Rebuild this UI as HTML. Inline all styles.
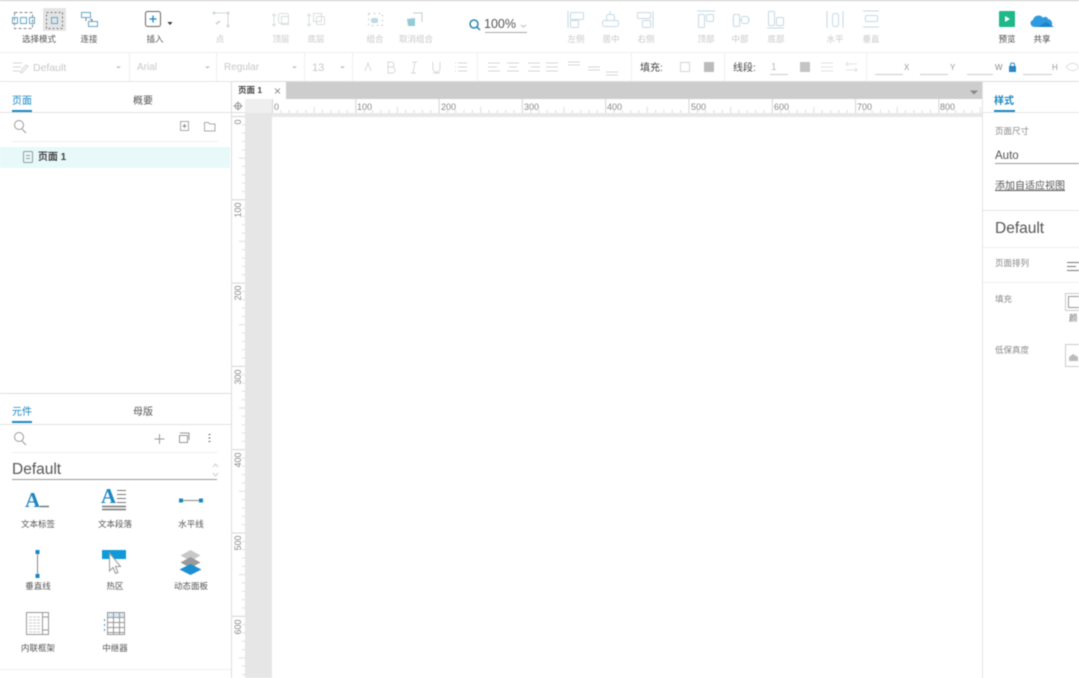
<!DOCTYPE html>
<html><head><meta charset="utf-8">
<style>
html,body{margin:0;padding:0;background:#fff}
#r{position:relative;width:1079px;height:678px;overflow:hidden;background:#fff;font-family:"Liberation Sans","Noto Sans CJK SC",sans-serif;filter:blur(.5px)}
#r div{position:absolute;white-space:nowrap}
.c{transform:translateX(-50%);line-height:12px}
.l{font-size:8.500px;color:#555}
.d{font-size:8.500px;color:#c9c9c9}
.g{font-size:10px;color:#c8c8c8;line-height:12px}
.tab{font-size:10px;line-height:12px;color:#555}
.on{color:#1b87c1}
.w{font-size:8.500px;color:#555}
svg{position:absolute;overflow:visible}
</style></head><body><div id="r">
<div style="left:0;top:0;width:1079px;height:1px;background:#c8c8c8"></div>
<div style="left:0;top:52px;width:1079px;height:1px;background:#eee"></div>
<div style="left:0;top:81px;width:231px;height:1px;background:#e6e6e6"></div>
<div style="left:231px;top:81px;width:848px;height:1px;background:#ddd"></div>

<!-- toolbar icons -->
<div style="left:43px;top:8px;width:23px;height:23px;background:#e4e4e4"></div>
<svg style="left:0;top:0" width="1079" height="52" fill="none" stroke-width="1">
<g stroke="#5fa9c9"><rect x="12.500" y="17.500" width="5" height="6"/><rect x="20.500" y="17.500" width="6" height="6"/><rect x="29.500" y="17.500" width="5" height="6"/></g>
<rect x="14.500" y="12.500" width="18" height="16" stroke="#888" stroke-dasharray="3 2"/>
<rect x="46.500" y="12.500" width="16" height="16" stroke="#777" stroke-dasharray="2 2"/><rect x="51.500" y="17.500" width="6" height="6" stroke="#5fa9c9"/>
<g stroke="#5fa9c9"><rect x="81.500" y="12.500" width="9" height="5"/><rect x="88.500" y="21.500" width="9" height="5"/></g><path d="M86 18v3M90 19.500h2v2" stroke="#777"/>
<rect x="145.500" y="11.500" width="15" height="15" rx="2" stroke="#666"/><path d="M153 15.500v7M149.500 19h7" stroke="#1b87c1" stroke-width="1.300"/>
<path d="M167.500 22h5l-2.500 3z" fill="#333"/>
<g stroke="#cfd8dc"><path d="M214 13h12M228 14v12"/><circle cx="214" cy="13" r="1" fill="#cfd8dc"/><circle cx="228" cy="13" r="1" fill="#cfd8dc"/><circle cx="228" cy="26" r="1" fill="#cfd8dc"/><path d="M216 24l4-3" stroke-width="2"/></g>
<g stroke="#d8dee0"><path d="M274 14v12M272 16l2-2 2 2M272 24l2 2 2-2"/><rect x="278.500" y="13.500" width="10" height="10" rx="2"/><rect x="281.500" y="16.500" width="7" height="8"/>
<path d="M309 14v12M307 16l2-2 2 2M307 24l2 2 2-2"/><rect x="313.500" y="13.500" width="8" height="8"/><rect x="316.500" y="16.500" width="8" height="8" rx="1"/></g>
<rect x="368.500" y="13.500" width="14" height="12" stroke="#cfcfcf" stroke-dasharray="2 3"/><rect x="371" y="18" width="7" height="5" rx="2" fill="#bcd9e4"/>
<path d="M407 19l8-1v8h-7z" fill="#96cbd6"/><path d="M413 13h9v9" stroke="#bfcfd6"/>
<circle cx="474" cy="24" r="4" stroke="#2b84b0" stroke-width="1.500"/><path d="M477 27l3 3" stroke="#2b84b0" stroke-width="1.500"/>
<path d="M485 32.500h42" stroke="#aaa"/><path d="M521 25l2.500 2 2.500-2" stroke="#bbb"/>
<g stroke="#c4dae4"><path d="M568 11v17"/><rect x="570.500" y="12.500" width="13" height="7" rx="1"/><rect x="570.500" y="20.500" width="8" height="7" rx="1"/>
<path d="M610 11v4"/><rect x="606.500" y="14.500" width="8" height="6" rx="2"/><rect x="602.500" y="20.500" width="16" height="6" rx="2"/>
<rect x="637.500" y="12.500" width="13" height="6" rx="1"/><rect x="642.500" y="20.500" width="8" height="7" rx="1"/><path d="M653 11v17"/>
<path d="M697 11h18"/><rect x="698.500" y="14.500" width="6" height="13" rx="1"/><rect x="706.500" y="14.500" width="7" height="7" rx="1"/>
<rect x="733.500" y="14.500" width="6" height="12" rx="1"/><rect x="741.500" y="16.500" width="7" height="7" rx="2"/><path d="M732 20h1M740 20h1M749 20h1"/>
<rect x="768.500" y="11.500" width="6" height="14" rx="1"/><rect x="776.500" y="17.500" width="7" height="8" rx="1"/><path d="M767 28h17"/>
<path d="M827 11v17M843 11v17"/><rect x="832.500" y="13.500" width="6" height="13" rx="2"/>
<path d="M863 11h16M863 27h16"/><rect x="865.500" y="15.500" width="12" height="6" rx="1"/></g>
<rect x="999" y="11" width="16" height="16" rx="1" fill="#1fb88a"/><path d="M1005 16l5 3-5 3z" fill="#fff"/>
<path d="M1035 27c-5 0-6-6-2-7 1-5 8-6 10-2 1-2 5-1 5 1 4 0 7 8 0 8z" fill="#2e9ae0"/><path d="M1038 27l8-5 8 5z" fill="#1d82c8"/>
</svg>

<div class="l c" style="left:39px;top:33px">选择模式</div>
<div class="l c" style="left:89px;top:33px">连接</div>
<div class="l c" style="left:155px;top:33px">插入</div>
<div class="d c" style="left:220px;top:33px">点</div>
<div class="d c" style="left:281px;top:33px">顶层</div>
<div class="d c" style="left:316px;top:33px">底层</div>
<div class="d c" style="left:375px;top:33px">组合</div>
<div class="d c" style="left:416px;top:33px">取消组合</div>
<div class="c" style="left:500px;top:17px;font-size:12.500px;color:#555;line-height:14px">100%</div>
<div class="d c" style="left:576px;top:33px">左侧</div>
<div class="d c" style="left:611px;top:33px">居中</div>
<div class="d c" style="left:646px;top:33px">右侧</div>
<div class="d c" style="left:706px;top:33px">顶部</div>
<div class="d c" style="left:740px;top:33px">中部</div>
<div class="d c" style="left:776px;top:33px">底部</div>
<div class="d c" style="left:835px;top:33px">水平</div>
<div class="d c" style="left:871px;top:33px">垂直</div>
<div class="l c" style="left:1007px;top:33px;color:#444">预览</div>
<div class="l c" style="left:1042px;top:33px;color:#444">共享</div>

<!-- format bar -->
<svg style="left:0;top:53px" width="1079" height="28" fill="none" stroke="#d6d6d6">
<path d="M129.500 0v28M216.500 0v28M304.500 0v28M352.500 0v28M477.500 0v28M631.500 0v28M724.500 0v28M866.500 0v28" stroke="#eee"/>
<path d="M13 10h9M13 14h8M13 18h6M20 19l6-7 2 1-6 7z"/>
<path d="M116 13.500h5l-2.500 2zM205 13.500h5l-2.500 2zM292 13.500h5l-2.500 2zM340 13.500h5l-2.500 2z" fill="#bbb" stroke="none"/>
<path d="M365 18l3-8 3 8M388 9h3c4 0 4 5 0 5h-3zM388 14h4c4 0 4 6 0 6h-4zM412 9h5M411 20h5M415 9l-2 11M433 9v7c0 4 7 4 7 0V9M433 20h7" stroke="#d8d8d8"/>
<path d="M458 10h9M458 14h9M458 18h9M455 10h1M455 14h1M455 18h1"/>
<path d="M488 10h12M488 14h9M488 18h12M507 10h12M509 14h8M507 18h12M528 10h12M531 14h9M528 18h12M546 10h12M546 14h12M546 18h12M568 9h12M568 12h12M588 14h12M588 17h12M606 19h12M606 22h12"/>
<rect x="680.500" y="9.500" width="9" height="9"/><rect x="704" y="9" width="10" height="10" fill="#bbb" stroke="none"/>
<rect x="800" y="9" width="10" height="10" fill="#c4c4c4" stroke="none"/>
<path d="M821 10h12M821 14h12M821 18h12M846 11h11M846 17h11M848 9l-2 2 2 2M855 15l2 2-2 2" stroke="#e2e2e2"/>
<path d="M770 21.500h18M875 21.500h28M920 21.500h28M967 21.500h26M1023 21.500h29" stroke="#ccc"/>
<path d="M1066 14c4-5 9-5 13 0M1066 14c4 5 9 5 13 0" stroke="#ddd"/>
</svg>
<svg style="left:1008px;top:62px" width="9" height="10"><rect x="1" y="4" width="7" height="6" fill="#2a86c4"/><path d="M2.500 4V2.500c0-2 4-2 4 0V4" fill="none" stroke="#2a86c4"/></svg>
<div class="g" style="left:33px;top:62px;font-size:10.500px">Default</div>
<div class="g" style="left:137px;top:62px">Arial</div>
<div class="g" style="left:224px;top:62px">Regular</div>
<div class="g" style="left:312px;top:62px;font-size:11px">13</div>
<div style="left:640px;top:63px;font-size:10px;color:#444;line-height:12px">填充:</div>
<div style="left:733px;top:63px;font-size:10px;color:#444;line-height:12px">线段:</div>
<div class="g" style="left:771px;top:62px;color:#bbb">1</div>
<div class="g" style="left:904px;top:62px;font-size:8px;color:#999">X</div>
<div class="g" style="left:950px;top:62px;font-size:8px;color:#999">Y</div>
<div class="g" style="left:995px;top:62px;font-size:8px;color:#888">W</div>
<div class="g" style="left:1052px;top:62px;font-size:8px;color:#999">H</div>

<!-- left panel -->
<div style="left:231px;top:82px;width:1px;height:596px;background:#ddd"></div>
<div class="tab on c" style="left:22px;top:96px">页面</div>
<div class="tab c" style="left:143px;top:96px">概要</div>
<div style="left:12px;top:110px;width:20px;height:2px;background:#1b87c1"></div>
<div style="left:0;top:112px;width:231px;height:1px;background:#e2e2e2"></div>
<div style="left:12px;top:141px;width:206px;height:1px;background:#eee"></div>
<div style="left:0;top:147px;width:230px;height:21px;background:#e7f9f9"></div>
<div class="c" style="left:52px;top:152px;font-size:10px;color:#444;font-weight:bold">页面 1</div>
<div style="left:0;top:393px;width:231px;height:1px;background:#ddd"></div>
<div class="tab on c" style="left:22px;top:407px">元件</div>
<div class="tab c" style="left:143px;top:407px">母版</div>
<div style="left:12px;top:421px;width:20px;height:2px;background:#1b87c1"></div>
<div style="left:0;top:424px;width:231px;height:1px;background:#e2e2e2"></div>
<div style="left:12px;top:452px;width:205px;height:1px;background:#eee"></div>
<div style="left:12px;top:461px;font-size:15.500px;line-height:18px;color:#555">Default</div>
<div style="left:12px;top:479px;width:205px;height:1px;background:#999"></div>
<div style="left:0;top:669px;width:231px;height:1px;background:#eee"></div>

<div style="left:25px;top:489px;font-family:'Liberation Serif',serif;font-weight:bold;font-size:21px;line-height:22px;color:#1b87c1">A</div>
<div style="left:101px;top:485px;font-family:'Liberation Serif',serif;font-weight:bold;font-size:21px;line-height:22px;color:#1b87c1">A</div>

<svg style="left:0;top:112px" width="231" height="566" fill="none">
<circle cx="19" cy="13" r="4.500" stroke="#999"/><path d="M22 17l4 4" stroke="#999"/>
<rect x="180.500" y="9.500" width="8" height="9" stroke="#aaa"/><path d="M184.500 12v4M182.500 14h4" stroke="#888"/>
<path d="M204.500 10.500h4l1 1.500h5.500v7h-10.500z" stroke="#aaa"/>
<rect x="23.500" y="39.500" width="9" height="11" rx="1" stroke="#999"/><path d="M26 43.500h4M26 46.500h4" stroke="#999"/>
<circle cx="19" cy="325" r="4.500" stroke="#999"/><path d="M22 329l4 4" stroke="#999"/>
<path d="M159.500 322v10M154.500 327h10" stroke="#999"/>
<path d="M180 321h9v7M179.500 323.500h8v7h-8z" stroke="#999"/>
<path d="M209.500 322v1M209.500 325.500v1M209.500 329v1" stroke="#666" stroke-width="2"/>
<path d="M213 355l2.500-3 2.500 3M213 361l2.500 3 2.500-3" stroke="#ccc"/>
<!-- widgets -->
<path d="M40 394.500h9" stroke="#777" stroke-width="1.500"/>
<path d="M117 378.500h9M117 382.500h9M117 386.500h9M117 390.500h9" stroke="#777"/><path d="M102 394.500h24M102 397.500h24" stroke="#777" stroke-width="1.500"/>
<path d="M181 388.500h20" stroke="#888"/><rect x="179" y="386.500" width="4" height="4" fill="#1b87c1"/><rect x="199" y="386.500" width="4" height="4" fill="#1b87c1"/>
<path d="M37.500 441v22" stroke="#888"/><rect x="35.500" y="438" width="4" height="4" fill="#1b87c1"/><rect x="35.500" y="462" width="4" height="4" fill="#1b87c1"/>
<rect x="102" y="438" width="24" height="9" fill="#0e9ad8"/>
<path d="M109.500 441v18l3.500-3.500 2.500 6 2.500-1-2.500-6h5z" fill="#fff" stroke="#999"/>
<path d="M190.500 438l10 5.500-10 5.500-10-5.500z" fill="#c8c8c8"/><path d="M190.500 445l10 5.500-10 5.500-10-5.500z" fill="#9a9a9a"/><path d="M190.500 452l11 5.500-11 5.500-11-5.500z" fill="#1b8fd0"/>
<rect x="26.500" y="500.500" width="22" height="22" stroke="#999"/><path d="M42.500 500v23M43 505h5M43 518h5" stroke="#999"/><path d="M29 505h11M29 508h11M29 511h11M29 514h11M29 517h11M29 520h11" stroke="#ccc" stroke-dasharray="3 1"/>
<rect x="107.500" y="500.500" width="17" height="22" stroke="#999"/><rect x="107.500" y="500.500" width="17" height="5" fill="#d8eaf2" stroke="#999"/><path d="M113.500 500v23M119.500 500v23M107 510.500h18M107 515.500h18M107 520.500h18" stroke="#999"/><path d="M104.500 507v15" stroke="#4a8fb5" stroke-dasharray="2 3"/>
</svg>
<div class="w c" style="left:38px;top:518px">文本标签</div>
<div class="w c" style="left:115px;top:518px">文本段落</div>
<div class="w c" style="left:191px;top:518px">水平线</div>
<div class="w c" style="left:38px;top:580px">垂直线</div>
<div class="w c" style="left:115px;top:580px">热区</div>
<div class="w c" style="left:191px;top:580px">动态面板</div>
<div class="w c" style="left:38px;top:642px">内联框架</div>
<div class="w c" style="left:115px;top:642px">中继器</div>

<!-- canvas -->
<div style="left:232px;top:82px;width:750px;height:17px;background:#cdcdcd"></div>
<div style="left:232px;top:82px;width:54px;height:17px;background:#fff"></div>
<div class="c" style="left:250px;top:84px;font-size:8.500px;color:#444;font-weight:bold">页面 1</div>
<svg style="left:232px;top:82px" width="750" height="36" fill="none">
<path d="M43 6.500l5 5M48 6.500l-5 5" stroke="#777" stroke-width=".8"/>
<path d="M738 8.500h8l-4 4z" fill="#888"/>
<circle cx="6" cy="24" r="3" stroke="#999"/><path d="M6 19.500v9M1.500 24h9" stroke="#999"/>
</svg>
<div style="left:245px;top:99px;width:27px;height:579px;background:#e6e6e6"></div>
<div style="left:245px;top:99px;width:27px;height:14px;background:#efefef"></div>
<div style="left:272px;top:113px;width:710px;height:4px;background:#e8e8e8"></div>
<div style="left:232px;top:112px;width:13px;height:1px;background:#ddd"></div>
<svg style="left:232px;top:99px" width="750" height="579" fill="none">
<defs>
<pattern id="hx" x="40" y="0" width="83.300" height="14" patternUnits="userSpaceOnUse"><path d="M.5 0v14" stroke="#d4d4d4"/><path d="M8.800 11v3M17.100 11v3M25.400 11v3M33.800 11v3M50.400 11v3M58.800 11v3M67.100 11v3M75.400 11v3" stroke="#ddd"/><path d="M42.100 8v6" stroke="#ddd"/></pattern>
<pattern id="vy" x="0" y="17" width="13" height="83.300" patternUnits="userSpaceOnUse"><path d="M0 .5h13" stroke="#d4d4d4"/><path d="M10 8.800h3M10 17.100h3M10 25.400h3M10 33.800h3M10 50.400h3M10 58.800h3M10 67.100h3M10 75.400h3" stroke="#ddd"/><path d="M7 42.100h6" stroke="#ddd"/></pattern>
</defs>
<rect x="40" y="0" width="710" height="14" fill="url(#hx)"/>
<rect x="0" y="17" width="13" height="562" fill="url(#vy)"/>
</svg>
<div style="left:274px;top:102px;font-size:9px;color:#888;line-height:10px">0</div>
<div style="left:357px;top:102px;font-size:9px;color:#888;line-height:10px">100</div>
<div style="left:441px;top:102px;font-size:9px;color:#888;line-height:10px">200</div>
<div style="left:524px;top:102px;font-size:9px;color:#888;line-height:10px">300</div>
<div style="left:607px;top:102px;font-size:9px;color:#888;line-height:10px">400</div>
<div style="left:691px;top:102px;font-size:9px;color:#888;line-height:10px">500</div>
<div style="left:774px;top:102px;font-size:9px;color:#888;line-height:10px">600</div>
<div style="left:857px;top:102px;font-size:9px;color:#888;line-height:10px">700</div>
<div style="left:940px;top:102px;font-size:9px;color:#888;line-height:10px">800</div>
<div style="left:238px;top:122px;font-size:9px;color:#888;line-height:10px;transform:translate(-50%,-50%) rotate(-90deg)">0</div>
<div style="left:238px;top:210px;font-size:9px;color:#888;line-height:10px;transform:translate(-50%,-50%) rotate(-90deg)">100</div>
<div style="left:238px;top:293px;font-size:9px;color:#888;line-height:10px;transform:translate(-50%,-50%) rotate(-90deg)">200</div>
<div style="left:238px;top:377px;font-size:9px;color:#888;line-height:10px;transform:translate(-50%,-50%) rotate(-90deg)">300</div>
<div style="left:238px;top:460px;font-size:9px;color:#888;line-height:10px;transform:translate(-50%,-50%) rotate(-90deg)">400</div>
<div style="left:238px;top:543px;font-size:9px;color:#888;line-height:10px;transform:translate(-50%,-50%) rotate(-90deg)">500</div>
<div style="left:238px;top:627px;font-size:9px;color:#888;line-height:10px;transform:translate(-50%,-50%) rotate(-90deg)">600</div>

<!-- right panel -->
<div style="left:982px;top:82px;width:97px;height:596px;background:#fff;border-left:1px solid #e4e4e4"></div>
<div class="tab on" style="left:994px;top:96px;font-weight:bold">样式</div>
<div style="left:994px;top:110px;width:21px;height:2px;background:#1b87c1"></div>
<div style="left:983px;top:112px;width:96px;height:1px;background:#e6e6e6"></div>
<div style="left:995px;top:125px;font-size:8.500px;color:#888;line-height:12px">页面尺寸</div>
<div style="left:995px;top:149px;font-size:11.500px;color:#555;line-height:14px">Auto</div>
<div style="left:995px;top:163px;width:84px;height:1px;background:#999"></div>
<div style="left:995px;top:180px;font-size:10px;color:#555;line-height:13px;text-decoration:underline">添加自适应视图</div>
<div style="left:983px;top:210px;width:96px;height:1px;background:#e6e6e6"></div>
<div style="left:995px;top:220px;font-size:15.500px;color:#555;line-height:18px">Default</div>
<div style="left:983px;top:247px;width:96px;height:1px;background:#eee"></div>
<div style="left:995px;top:257px;font-size:8.500px;color:#888;line-height:12px">页面排列</div>
<div style="left:983px;top:282px;width:96px;height:1px;background:#eee"></div>
<div style="left:995px;top:293px;font-size:8.500px;color:#888;line-height:12px">填充</div>
<div style="left:1069px;top:312px;font-size:8.500px;color:#666;line-height:12px">颜</div>
<div style="left:995px;top:344px;font-size:8.500px;color:#888;line-height:12px">低保真度</div>
<svg style="left:1060px;top:255px" width="19" height="120" fill="none">
<path d="M7 7.500h12M7 11.500h9M7 15.500h12" stroke="#777"/>
<rect x="5.500" y="38.500" width="20" height="17" stroke="#ccc"/><rect x="8.500" y="41.500" width="20" height="11" stroke="#999"/>
<rect x="5.500" y="89.500" width="20" height="22" stroke="#ccc"/><path d="M9 106v-4l4-3 5 3v4z" fill="#bbb"/>
</svg>
</div></body></html>
